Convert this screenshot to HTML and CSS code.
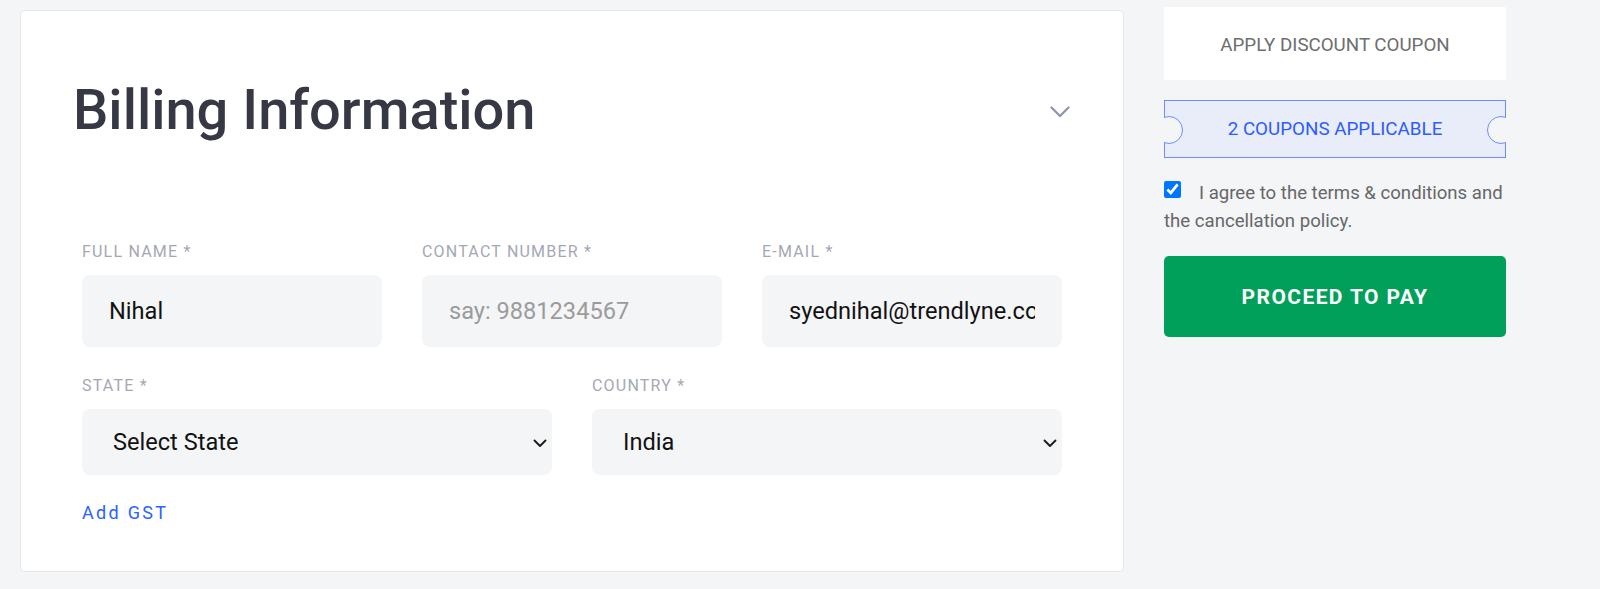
FILE: index.html
```html
<!DOCTYPE html>
<html lang="en">
<head>
<meta charset="utf-8">
<title>Billing Information</title>
<link rel="stylesheet" href="styles.css">
</head>
<body>
<div class="page">
  <section class="card">
    <header class="card-head">
      <h1 class="title">Billing Information</h1>
      <svg class="collapse" width="20" height="12" viewBox="0 0 20 12" aria-hidden="true">
        <path d="M1.5 1.5 L10 10 L18.5 1.5" fill="none" stroke="#8c95a8" stroke-width="2.2" stroke-linecap="round" stroke-linejoin="round"/>
      </svg>
    </header>
    <div class="form">
      <div class="row row-3">
        <div class="field">
          <label class="label">FULL NAME *</label>
          <input class="input" type="text" value="Nihal">
        </div>
        <div class="field">
          <label class="label">CONTACT NUMBER *</label>
          <input class="input" type="text" placeholder="say: 9881234567">
        </div>
        <div class="field">
          <label class="label">E-MAIL *</label>
          <input class="input" type="text" value="syednihal@trendlyne.com">
        </div>
      </div>
      <div class="row row-2">
        <div class="field">
          <label class="label">STATE *</label>
          <div class="select">
            <select class="select-el"><option>Select State</option></select>
            <svg class="select-arrow" width="14" height="9" viewBox="0 0 14 9" aria-hidden="true">
              <path d="M1.5 1.5 L7 7 L12.5 1.5" fill="none" stroke="#1c1c1c" stroke-width="1.9" stroke-linecap="round" stroke-linejoin="round"/>
            </svg>
          </div>
        </div>
        <div class="field">
          <label class="label">COUNTRY *</label>
          <div class="select">
            <select class="select-el"><option>India</option></select>
            <svg class="select-arrow" width="14" height="9" viewBox="0 0 14 9" aria-hidden="true">
              <path d="M1.5 1.5 L7 7 L12.5 1.5" fill="none" stroke="#1c1c1c" stroke-width="1.9" stroke-linecap="round" stroke-linejoin="round"/>
            </svg>
          </div>
        </div>
      </div>
      <a class="add-gst" href="#">Add GST</a>
    </div>
  </section>
  <aside class="side">
    <div class="apply">APPLY DISCOUNT COUPON</div>
    <div class="ticket">2 COUPONS APPLICABLE</div>
    <p class="agree"><input class="check" type="checkbox" checked>I agree to the terms &amp; conditions and<br>the cancellation policy.</p>
    <button class="pay" type="button">PROCEED TO PAY</button>
  </aside>
</div>
</body>
</html>
```
FILE: styles.css
```css
* { box-sizing: border-box; }

html, body {
  margin: 0;
  background: #f4f5f7;
  font-family: Roboto, "Liberation Sans", Arial, sans-serif;
}

.page {
  display: flex;
  align-items: flex-start;
  gap: 40px;
  padding: 7px 0 0 20px;
}

/* ---------- card ---------- */
.card {
  width: 1104px;
  margin-top: 3px;
  background: #ffffff;
  border: 1px solid #e6e8eb;
  border-radius: 5px;
  padding: 0 61px 48px 61px;
}

.card-head {
  display: flex;
  justify-content: space-between;
  align-items: flex-start;
  padding: 65px 0 0 0;
  margin: 0 -8px 0 -9px;
}

.title {
  margin: 0;
  font-size: 56px;
  line-height: 68px;
  font-weight: 500;
  color: #363944;
  letter-spacing: 0;
}

.collapse {
  display: block;
  margin-top: 30px;
}

.form {
  margin-top: 98px;
  display: flex;
  flex-direction: column;
}

.row {
  display: grid;
  column-gap: 40px;
}

.row-3 { grid-template-columns: repeat(3, 1fr); }
.row-2 { grid-template-columns: repeat(2, 1fr); margin-top: 29px; }

.field {
  display: flex;
  flex-direction: column;
  gap: 14px;
}

.label {
  font-size: 16px;
  line-height: 19px;
  letter-spacing: 1.2px;
  color: #a5a8b4;
  font-weight: 400;
}

.input {
  width: 100%;
  height: 72px;
  border: none;
  outline: none;
  border-radius: 8px;
  background: #f4f5f7;
  padding: 0 27px;
  font-family: Roboto, "Liberation Sans", Arial, sans-serif;
  font-size: 23.6px;
  color: #121212;
}

.input::placeholder { color: #9b9b9b; }

.select {
  display: flex;
  align-items: center;
  height: 66px;
  border-radius: 8px;
  background: #f4f5f7;
  padding: 0 5px 0 31px;
}

.select-el {
  flex: 1;
  appearance: none;
  -webkit-appearance: none;
  border: none;
  outline: none;
  background: transparent;
  padding: 0;
  font-family: Roboto, "Liberation Sans", Arial, sans-serif;
  font-size: 23.6px;
  color: #121212;
}

.select-arrow {
  display: block;
  margin-top: 2px;
}

.add-gst {
  margin-top: 27px;
  font-size: 18px;
  line-height: 21px;
  letter-spacing: 2.3px;
  color: #2962ff;
  text-decoration: none;
  align-self: flex-start;
}

/* ---------- side ---------- */
.side {
  width: 342px;
  display: flex;
  flex-direction: column;
}

.apply {
  height: 73px;
  background: #ffffff;
  display: flex;
  align-items: center;
  justify-content: center;
  font-size: 18.75px;
  color: #6e6e6e;
  padding-top: 2px;
}

.ticket {
  position: relative;
  margin-top: 20px;
  height: 58px;
  background: #e9edf9;
  border: 1px solid #6d8dff;
  display: flex;
  align-items: center;
  justify-content: center;
  font-size: 18.8px;
  color: #2f5cff;
}

.ticket::before,
.ticket::after {
  content: "";
  position: absolute;
  top: 50%;
  width: 26px;
  height: 26px;
  margin-top: -13px;
  border-radius: 50%;
  border: 1px solid #6d8dff;
  background: #f4f5f7;
}

.ticket::before {
  left: -10px;
  clip-path: inset(0 0 0 9px);
}

.ticket::after {
  right: -10px;
  clip-path: inset(0 9px 0 0);
}

.agree {
  margin: 21px 0 0 0;
  font-size: 18.6px;
  line-height: 28px;
  color: #676767;
  white-space: nowrap;
}

.check {
  width: 17px;
  height: 17px;
  margin: 2px 18px 0 0;
  vertical-align: top;
}

.pay {
  margin-top: 21px;
  height: 81px;
  width: 100%;
  border: none;
  border-radius: 5px;
  background: #00a05a;
  color: #ffffff;
  font-family: Roboto, "Liberation Sans", Arial, sans-serif;
  font-size: 21px;
  font-weight: 700;
  letter-spacing: 1.4px;
  cursor: pointer;
}
```
